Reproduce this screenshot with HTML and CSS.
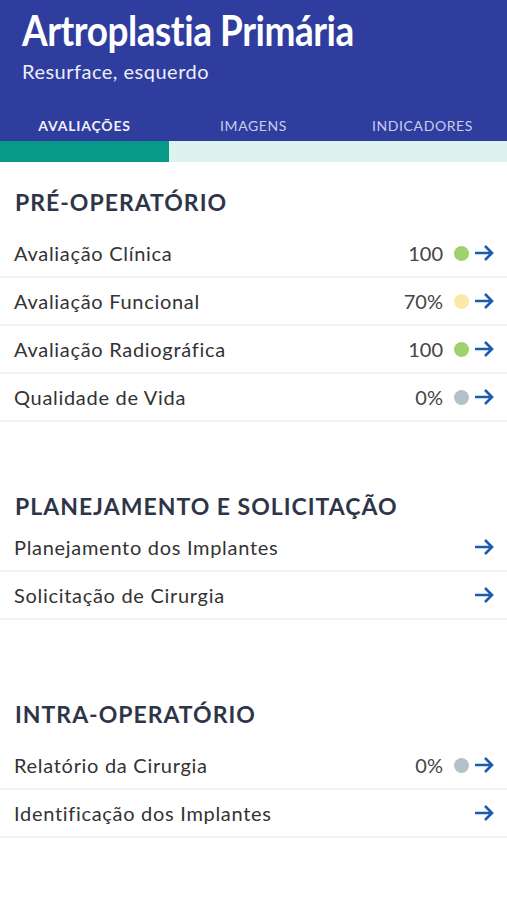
FILE: index.html
```html
<!DOCTYPE html>
<html lang="pt-BR">
<head>
    <meta charset="UTF-8">
    <meta name="viewport" content="width=device-width, initial-scale=1.0">
    <title>Artroplastia Primária</title>
    <link rel="stylesheet" href="styles.css">
</head>
<body>
    <header class="topbar">
        <div class="heading">
            <h1 class="title">Artroplastia Primária</h1>
            <p class="subtitle">Resurface, esquerdo</p>
        </div>
        <nav class="tabs">
            <a class="tab tab-active" href="#">Avaliações</a>
            <a class="tab" href="#">Imagens</a>
            <a class="tab" href="#">Indicadores</a>
        </nav>
    </header>
    <div class="progress"><div class="progress-fill"></div></div>

    <main>
        <section class="group">
            <h2 class="group-title">Pré-operatório</h2>
            <ul class="items">
                <li class="item">
                    <span class="item-name">Avaliação Clínica</span>
                    <span class="item-value">100</span>
                    <span class="dot dot-green"></span>
                    <svg class="arrow" viewBox="0 0 20 18"><path d="M1 9H18M11 2L18 9L11 16"/></svg>
                </li>
                <li class="item">
                    <span class="item-name">Avaliação Funcional</span>
                    <span class="item-value">70%</span>
                    <span class="dot dot-yellow"></span>
                    <svg class="arrow" viewBox="0 0 20 18"><path d="M1 9H18M11 2L18 9L11 16"/></svg>
                </li>
                <li class="item">
                    <span class="item-name">Avaliação Radiográfica</span>
                    <span class="item-value">100</span>
                    <span class="dot dot-green"></span>
                    <svg class="arrow" viewBox="0 0 20 18"><path d="M1 9H18M11 2L18 9L11 16"/></svg>
                </li>
                <li class="item">
                    <span class="item-name">Qualidade de Vida</span>
                    <span class="item-value">0%</span>
                    <span class="dot dot-grey"></span>
                    <svg class="arrow" viewBox="0 0 20 18"><path d="M1 9H18M11 2L18 9L11 16"/></svg>
                </li>
            </ul>
        </section>

        <section class="group group-compact">
            <h2 class="group-title">Planejamento e Solicitação</h2>
            <ul class="items">
                <li class="item">
                    <span class="item-name">Planejamento dos Implantes</span>
                    <svg class="arrow" viewBox="0 0 20 18"><path d="M1 9H18M11 2L18 9L11 16"/></svg>
                </li>
                <li class="item">
                    <span class="item-name">Solicitação de Cirurgia</span>
                    <svg class="arrow" viewBox="0 0 20 18"><path d="M1 9H18M11 2L18 9L11 16"/></svg>
                </li>
            </ul>
        </section>

        <section class="group">
            <h2 class="group-title">Intra-operatório</h2>
            <ul class="items">
                <li class="item">
                    <span class="item-name">Relatório da Cirurgia</span>
                    <span class="item-value">0%</span>
                    <span class="dot dot-grey"></span>
                    <svg class="arrow" viewBox="0 0 20 18"><path d="M1 9H18M11 2L18 9L11 16"/></svg>
                </li>
                <li class="item">
                    <span class="item-name">Identificação dos Implantes</span>
                    <svg class="arrow" viewBox="0 0 20 18"><path d="M1 9H18M11 2L18 9L11 16"/></svg>
                </li>
            </ul>
        </section>
    </main>
</body>
</html>
```

FILE: styles.css
```css
body {
    margin: 0;
    background: #ffffff;
    font-family: Lato, "Open Sans", sans-serif;
    color: #333333;
}
.topbar {
    background-color: #2f3d9e;
    color: #ffffff;
    padding-top: 7px;
}
.heading {
    padding-left: 22px;
}
.title {
    margin: 0;
    font-size: 42px;
    line-height: 46px;
    font-weight: bold;
    letter-spacing: -.5px;
    transform: scaleX(.88);
    transform-origin: left center;
}
.subtitle {
    margin: 5px 0 0;
    font-size: 20px;
    line-height: 26px;
    letter-spacing: .5px;
    color: #eceef8;
}
.tabs {
    display: flex;
}
.tab {
    flex: 1;
    text-align: center;
    padding: 33px 0 6px;
    font-size: 14px;
    line-height: 18px;
    letter-spacing: .6px;
    text-transform: uppercase;
    text-decoration: none;
    color: #c9cdeb;
}
.tab-active {
    font-weight: bold;
    letter-spacing: .8px;
    color: #eef0fa;
}
.progress {
    height: 21px;
    background-color: #dcf3ee;
}
.progress-fill {
    width: 33.4%;
    height: 100%;
    background-color: #089a88;
}
.group {
    margin-top: 79px;
}
.group:first-child {
    margin-top: 25px;
}
.group-compact {
    margin-top: 69px;
}
.group-title {
    margin: 0 0 13px;
    padding-left: 15px;
    font-size: 23px;
    line-height: 30px;
    font-weight: bold;
    letter-spacing: 1px;
    text-transform: uppercase;
    color: #2f3549;
}
.group-compact .group-title {
    margin-bottom: 3px;
}
.items {
    list-style: none;
    margin: 0;
    padding: 0;
}
.item {
    display: flex;
    align-items: center;
    padding: 11px 13px 11px 14px;
    border-bottom: 2px solid #f1f1f1;
    font-size: 20px;
    line-height: 24px;
    letter-spacing: .7px;
}
.item-name {
    flex: 1;
}
.item-value {
    color: #444444;
    letter-spacing: 0;
}
.dot {
    width: 15px;
    height: 15px;
    border-radius: 50%;
    margin-left: 11px;
}
.dot-green {
    background-color: #9fd16c;
}
.dot-yellow {
    background-color: #fde8a8;
}
.dot-grey {
    background-color: #b4c1c8;
}
.arrow {
    width: 20px;
    height: 18px;
    margin-left: 5px;
    fill: none;
    stroke: #1a5ea8;
    stroke-width: 2.6;
}
```
